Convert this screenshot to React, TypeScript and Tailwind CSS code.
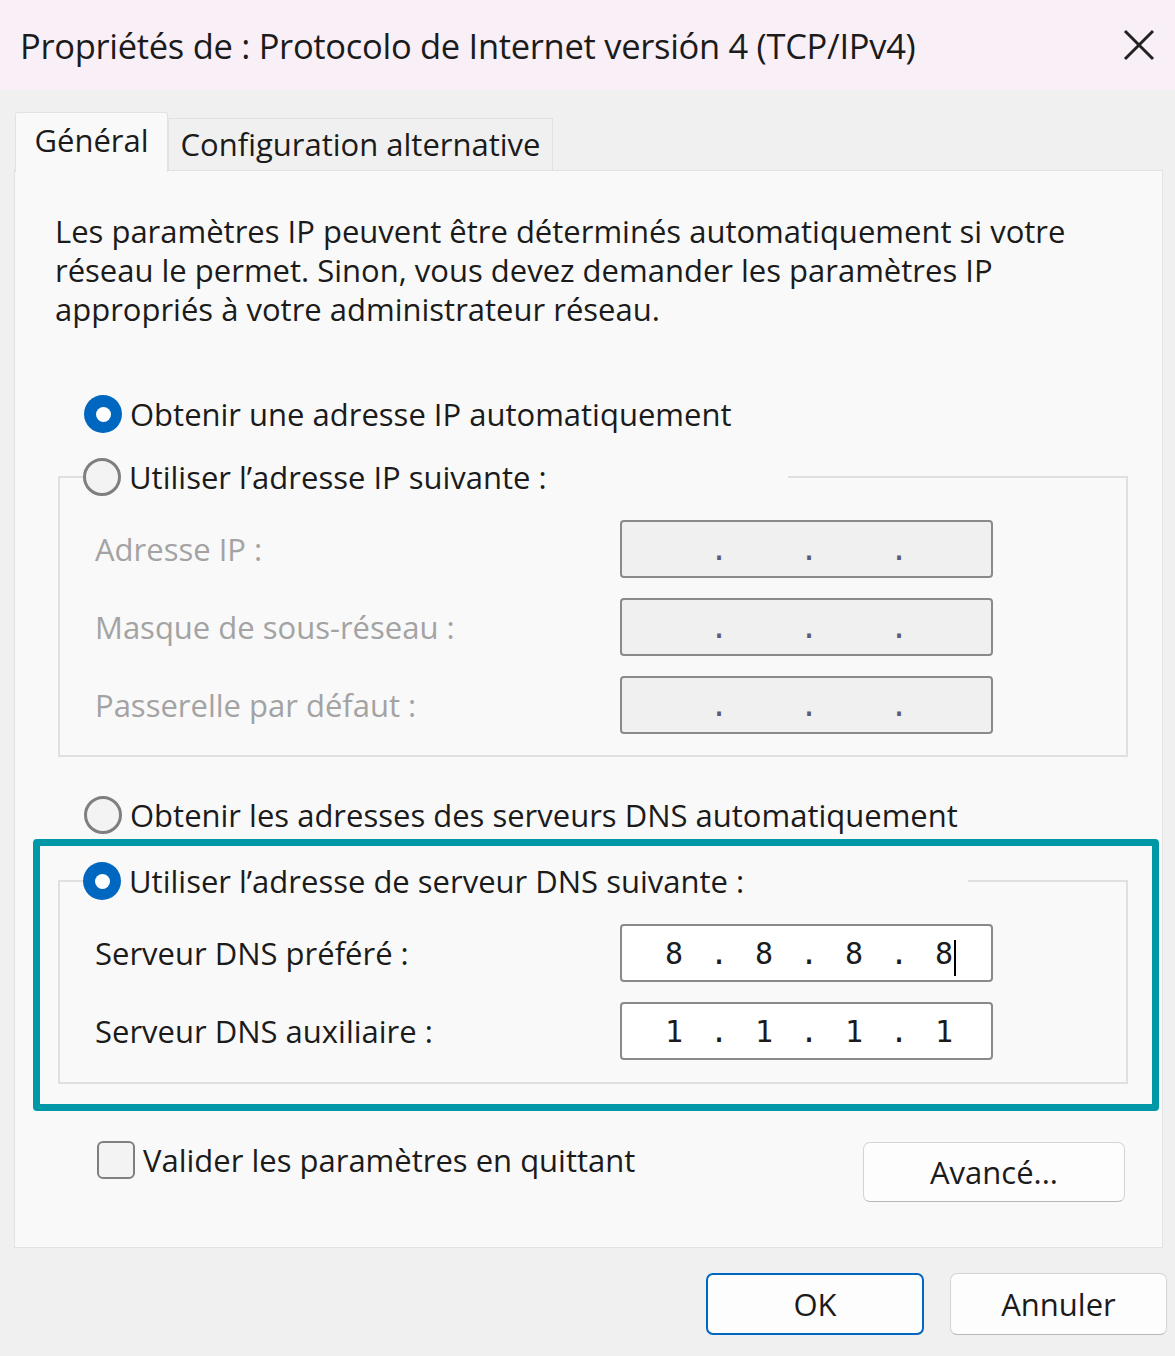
import React from 'react';

const font = "font-['Open_Sans','Noto_Sans',sans-serif]";

const Radio: React.FC<{ checked?: boolean }> = ({ checked }) =>
  checked ? (
    <span className="flex h-[38px] w-[38px] shrink-0 items-center justify-center rounded-full bg-[#0067c0]">
      <span className="h-[15px] w-[15px] rounded-full bg-white" />
    </span>
  ) : (
    <span className="h-[38px] w-[38px] shrink-0 rounded-full border-[3px] border-[#7f7f7f] bg-[#f3f3f3]" />
  );

const RadioRow: React.FC<{ checked?: boolean; label: string }> = ({ checked, label }) => (
  <div className="flex h-[40px] items-center gap-[8px]">
    <Radio checked={checked} />
    <span className="whitespace-nowrap text-[#1b1b1b]">{label}</span>
  </div>
);

const IpField: React.FC<{ parts?: string[]; disabled?: boolean; caret?: boolean }> = ({ parts, disabled, caret }) => (
  <div
    className={`flex h-[58px] w-[373px] items-center rounded-[4px] border-2 border-[#8a8a8a] pl-[17px] font-['DejaVu_Sans_Mono',monospace] text-[30px] text-[#1b1b1b] ${
      disabled ? 'bg-[#f0f0f0]' : 'bg-white'
    }`}
  >
    {[0, 1, 2, 3].map((i) => (
      <React.Fragment key={i}>
        <span className="relative w-[70px] text-center">
          {parts ? parts[i] : '\u00a0'}
          {caret && i === 3 && (
            <span className="absolute left-[calc(50%+10px)] top-[6px] h-[36px] w-[2px] bg-black" />
          )}
        </span>
        {i < 3 && <span className={`w-[20px] text-center ${disabled ? 'text-[#5a5a7a]' : ''}`}>.</span>}
      </React.Fragment>
    ))}
  </div>
);

const FieldRow: React.FC<{ label: string; disabled?: boolean; parts?: string[]; caret?: boolean }> = ({
  label,
  disabled,
  parts,
  caret,
}) => (
  <div className="flex h-[58px] items-center">
    <span className={`w-[560px] pl-[35px] ${disabled ? 'text-[#a3a3a3]' : 'text-[#1b1b1b]'}`}>{label}</span>
    <IpField parts={parts} disabled={disabled} caret={caret} />
  </div>
);

const App: React.FC = () => {
  return (
    <div className={`flex h-[1356px] w-[1175px] flex-col bg-[#f0f0f0] text-[31px] leading-[39px] ${font}`}>
      {/* title bar */}
      <div className="flex h-[90px] shrink-0 items-center justify-between bg-[#f9eff7] pl-[20px] pr-[20px]">
        <span className="whitespace-nowrap text-[34.5px] tracking-[-0.3px] text-[#1b1b1b]">
          Propriétés de : Protocolo de Internet versión 4 (TCP/IPv4)
        </span>
        <svg width="32" height="32" viewBox="0 0 32 32">
          <path d="M2 2 L30 30 M30 2 L2 30" stroke="#222" strokeWidth="3" />
        </svg>
      </div>

      {/* tabs */}
      <div className="ml-[15px] mt-[22px] flex h-[58px] items-end">
        <div className="relative z-10 -mb-[2px] flex h-[60px] w-[153px] items-center justify-center rounded-t-[3px] border border-b-0 border-[#e2e2e2] bg-[#f9f9f9] pb-[4px] text-[#1b1b1b]">
          Général
        </div>
        <div className="flex h-[52px] w-[385px] items-center justify-center whitespace-nowrap border border-b-0 border-[#e2e2e2] bg-[#f0f0f0] text-[#1b1b1b]">
          Configuration alternative
        </div>
      </div>

      {/* panel */}
      <div className="ml-[14px] flex h-[1078px] w-[1149px] flex-col border border-[#e2e2e2] bg-[#f9f9f9] pt-[41px]">
        <p className="ml-[40px] whitespace-nowrap text-[#1b1b1b]">
          Les paramètres IP peuvent être déterminés automatiquement si votre
          <br />
          réseau le permet. Sinon, vous devez demander les paramètres IP
          <br />
          appropriés à votre administrateur réseau.
        </p>

        <div className="ml-[69px] mt-[65px]">
          <RadioRow checked label="Obtenir une adresse IP automatiquement" />
        </div>

        <fieldset className="ml-[43px] mt-[23px] w-[1070px] border-2 border-[#e0e0e0] pb-[21px]">
          <legend className="ml-[23px] w-[705px]">
            <RadioRow label="Utiliser l’adresse IP suivante :" />
          </legend>
          <div className="mt-[23px] flex flex-col gap-[20px]">
            <FieldRow disabled label="Adresse IP :" />
            <FieldRow disabled label="Masque de sous-réseau :" />
            <FieldRow disabled label="Passerelle par défaut :" />
          </div>
        </fieldset>

        <div className="ml-[69px] mt-[38px]">
          <RadioRow label="Obtenir les adresses des serveurs DNS automatiquement" />
        </div>

        <div className="ml-[18px] mt-[4px] w-[1126px] rounded-[4px] border-[7px] border-[#0097a7] pb-[20px] pt-[15px]">
          <fieldset className="ml-[18px] w-[1070px] border-2 border-[#e0e0e0] pb-[22px]">
            <legend className="ml-[23px] w-[885px]">
              <RadioRow checked label="Utiliser l’adresse de serveur DNS suivante :" />
            </legend>
            <div className="mt-[23px] flex flex-col gap-[20px]">
              <FieldRow label="Serveur DNS préféré :" parts={['8', '8', '8', '8']} caret />
              <FieldRow label="Serveur DNS auxiliaire :" parts={['1', '1', '1', '1']} />
            </div>
          </fieldset>
        </div>

        <div className="ml-[82px] mr-[37px] mt-[30px] flex items-start justify-between">
          <div className="flex h-[38px] items-center gap-[8px]">
            <span className="h-[38px] w-[38px] rounded-[6px] border-2 border-[#7f7f7f] bg-[#f3f3f3]" />
            <span className="whitespace-nowrap text-[#1b1b1b]">Valider les paramètres en quittant</span>
          </div>
          <button className="mt-[1px] h-[60px] w-[262px] rounded-[7px] border border-[#d4d4d4] border-b-[#b8b8b8] bg-[#fdfdfd] text-[#1b1b1b]">
            Avancé...
          </button>
        </div>
      </div>

      {/* footer */}
      <div className="mr-[8px] mt-[25px] flex justify-end gap-[26px]">
        <button className="h-[62px] w-[218px] rounded-[7px] border-2 border-[#0067c0] bg-[#fdfdfd] text-[#1b1b1b]">
          OK
        </button>
        <button className="h-[62px] w-[217px] rounded-[7px] border border-[#d4d4d4] border-b-[#b8b8b8] bg-[#fdfdfd] text-[#1b1b1b]">
          Annuler
        </button>
      </div>
    </div>
  );
};

export default App;
